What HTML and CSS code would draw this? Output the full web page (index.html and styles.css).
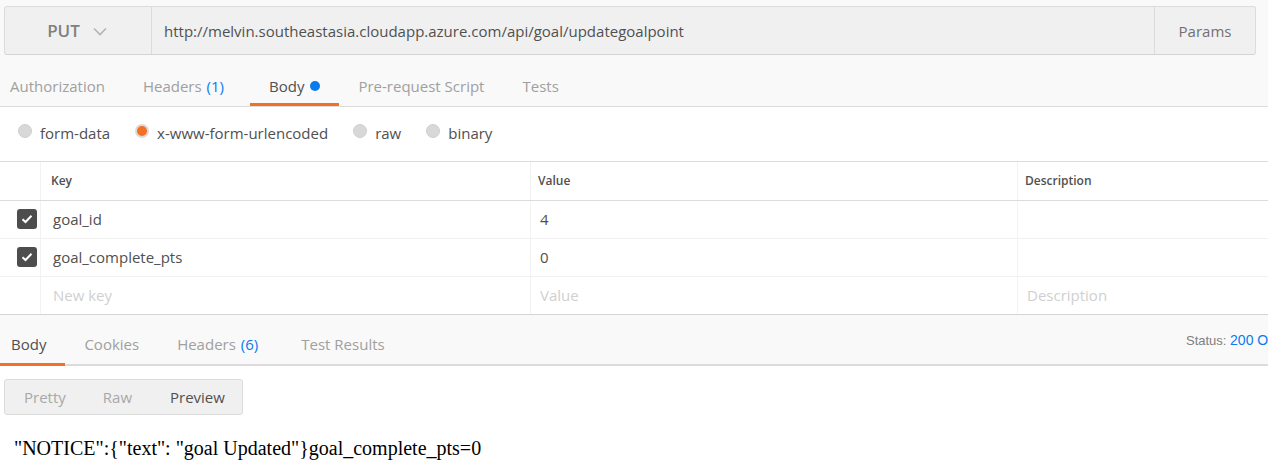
FILE: index.html
```html
<!DOCTYPE html>
<html>
<head>
<meta charset="utf-8">
<link rel="stylesheet" href="styles.css">
</head>
<body>
<div class="top">
  <div class="urlbar">
    <div class="method">
      <span class="method-name">PUT</span>
      <svg class="chev" width="14" height="9" viewBox="0 0 14 9"><path d="M1 1.5 L7 7.5 L13 1.5" fill="none" stroke="#b3b3b3" stroke-width="1.6"/></svg>
    </div>
    <div class="url">http://melvin.southeastasia.cloudapp.azure.com/api/goal/updategoalpoint</div>
    <div class="params">Params</div>
  </div>
  <div class="tabs">
    <div class="tab first">Authorization</div>
    <div class="tab wide">Headers <span class="count">(1)</span></div>
    <div class="tab active">Body <span class="dot"></span></div>
    <div class="tab">Pre-request Script</div>
    <div class="tab">Tests</div>
  </div>
</div>

<div class="modes">
  <label class="mode"><span class="radio"></span>form-data</label>
  <label class="mode"><span class="radio on"></span>x-www-form-urlencoded</label>
  <label class="mode"><span class="radio"></span>raw</label>
  <label class="mode"><span class="radio"></span>binary</label>
</div>

<div class="kv">
  <div class="row head">
    <div class="cell chk"></div>
    <div class="cell keycol">Key</div>
    <div class="cell">Value</div>
    <div class="cell">Description</div>
  </div>
  <div class="row">
    <div class="cell chk"><span class="box"><svg width="12" height="10" viewBox="0 0 12 10"><path d="M1.5 5.2 L4.5 8 L10.5 1.8" fill="none" stroke="#fff" stroke-width="2"/></svg></span></div>
    <div class="cell keycol">goal_id</div>
    <div class="cell">4</div>
    <div class="cell"></div>
  </div>
  <div class="row">
    <div class="cell chk"><span class="box"><svg width="12" height="10" viewBox="0 0 12 10"><path d="M1.5 5.2 L4.5 8 L10.5 1.8" fill="none" stroke="#fff" stroke-width="2"/></svg></span></div>
    <div class="cell keycol">goal_complete_pts</div>
    <div class="cell">0</div>
    <div class="cell"></div>
  </div>
  <div class="row last">
    <div class="cell chk"></div>
    <div class="cell keycol ph">New key</div>
    <div class="cell ph">Value</div>
    <div class="cell ph">Description</div>
  </div>
</div>

<div class="resp-bar">
  <div class="rtabs">
    <div class="rtab active first">Body</div>
    <div class="rtab">Cookies</div>
    <div class="rtab wide">Headers <span class="count">(6)</span></div>
    <div class="rtab">Test Results</div>
  </div>
  <div class="status">Status:&nbsp; <span class="ok">200 OK</span></div>
</div>

<div class="viewer">
  <div class="seg">
    <span class="segitem">Pretty</span>
    <span class="segitem">Raw</span>
    <span class="segitem sel">Preview</span>
  </div>
</div>

<div class="preview">"NOTICE":{"text": "goal Updated"}goal_complete_pts=0</div>
</body>
</html>
```

FILE: styles.css
```css
html, body {
  margin: 0;
  padding: 0;
  background: #fff;
  font-family: "Open Sans", "Noto Sans", sans-serif;
  overflow: hidden;
  width: 1268px;
}

.top {
  background: #f9f9f9;
  padding: 6px 12px 0 4px;
  border-bottom: 1px solid #dcdcdc;
}

.urlbar {
  display: flex;
  height: 47px;
  background: #f0f0f0;
  border: 1px solid #dcdcdc;
  border-bottom-color: #d4d4d4;
  border-radius: 3px;
}

.method {
  width: 144px;
  flex-shrink: 0;
  border-right: 1px solid #dcdcdc;
  display: flex;
  align-items: center;
  justify-content: center;
  gap: 13px;
  padding-right: 2px;
}

.method-name {
  font-size: 17px;
  font-weight: 600;
  color: #808080;
}

.chev { margin-top: 1px; }

.url {
  flex: 1;
  display: flex;
  align-items: center;
  padding-left: 12px;
  font-size: 15px;
  color: #505050;
}

.params {
  width: 100px;
  flex-shrink: 0;
  border-left: 1px solid #dcdcdc;
  display: flex;
  align-items: center;
  justify-content: center;
  font-size: 15px;
  color: #707070;
}

.tabs {
  display: flex;
  height: 51px;
  margin-left: -4px;
}

.tab {
  display: flex;
  align-items: center;
  padding: 13px 19px 0;
  font-size: 15px;
  color: #a0a0a0;
  border-bottom: 3px solid transparent;
}

.tab.first { padding-left: 10px; }
.tab.wide { padding-right: 26px; }

.tab.active {
  color: #505050;
  border-bottom-color: #f47023;
}

.count { color: #097bed; margin-left: 5px; }

.dot {
  width: 10px;
  height: 10px;
  border-radius: 50%;
  background: #097bed;
  margin-left: 6px;
}

.modes {
  display: flex;
  align-items: center;
  height: 52px;
  padding-left: 18px;
  padding-bottom: 2px;
  gap: 25px;
}

.mode {
  display: flex;
  align-items: center;
  font-size: 15px;
  color: #505050;
}

.radio {
  width: 14px;
  height: 14px;
  border-radius: 50%;
  background: #d8d8d8;
  border: 1px solid #cfcfcf;
  box-sizing: border-box;
  margin-right: 8px;
  margin-top: -4px;
}

.radio.on {
  background: #f47023;
  border: 2px solid #dadada;
}

.kv {
  border-top: 1px solid #dcdcdc;
  border-bottom: 1px solid #d4d4d4;
}

.row {
  display: grid;
  grid-template-columns: 40px 490px 487px 1fr;
  height: 37px;
  border-bottom: 1px solid #f0f0f0;
}

.row.head {
  border-bottom-color: #dcdcdc;
  height: 38px;
}

.row.last { border-bottom: none; }

.cell {
  display: flex;
  align-items: center;
  padding-left: 9px;
  padding-bottom: 1px;
  font-size: 15px;
  color: #505050;
  border-left: 1px solid #f2f2f2;
}

.cell.keycol { padding-left: 12px; }

.cell.chk {
  border-left: none;
  padding-left: 17px;
}

.head .cell {
  font-size: 12px;
  font-weight: 600;
  color: #505050;
  padding-left: 7px;
}

.head .cell.keycol { padding-left: 10px; }

.head .cell.chk { padding-left: 0; }

.ph { color: #d0d0d0; }

.box {
  width: 20px;
  height: 20px;
  border-radius: 3px;
  background: #4d4d4d;
  display: flex;
  align-items: center;
  justify-content: center;
}

.resp-bar {
  display: flex;
  height: 48px;
  background: #f9f9f9;
  border-bottom: 2px solid #dcdcdc;
  border-top: 1px solid #f9f9f9;
}

.rtabs {
  flex: 1;
  display: flex;
}

.rtab {
  display: flex;
  align-items: center;
  padding: 9px 19px 0;
  font-size: 15px;
  color: #a0a0a0;
  border-bottom: 3px solid transparent;
  margin-bottom: -2px;
}

.rtab.first { padding-left: 11px; }
.rtab.wide { padding-right: 24px; }

.rtab.active {
  color: #505050;
  border-bottom-color: #f47023;
}

.status {
  width: 82px;
  flex-shrink: 0;
  white-space: nowrap;
  overflow: hidden;
  font-family: "Liberation Sans", Arial, sans-serif;
  font-size: 13px;
  color: #808080;
  display: flex;
  align-items: center;
}

.ok { color: #097bed; font-size: 14px; }

.viewer {
  padding: 13px 0 0 4px;
}

.seg {
  display: inline-flex;
  align-items: center;
  width: 239px;
  height: 36px;
  box-sizing: border-box;
  background: #f0f0f0;
  border: 1px solid #dcdcdc;
  border-radius: 3px;
}

.segitem {
  font-size: 15px;
  color: #a8a8a8;
}

.segitem:nth-child(1) { margin-left: 19px; }
.segitem:nth-child(2) { margin-left: 37px; }
.segitem:nth-child(3) { margin-left: 38px; }

.segitem.sel { color: #505050; }

.preview {
  font-family: "Liberation Serif", "Times New Roman", serif;
  font-size: 20px;
  color: #000;
  padding: 22px 0 0 14px;
}
```
